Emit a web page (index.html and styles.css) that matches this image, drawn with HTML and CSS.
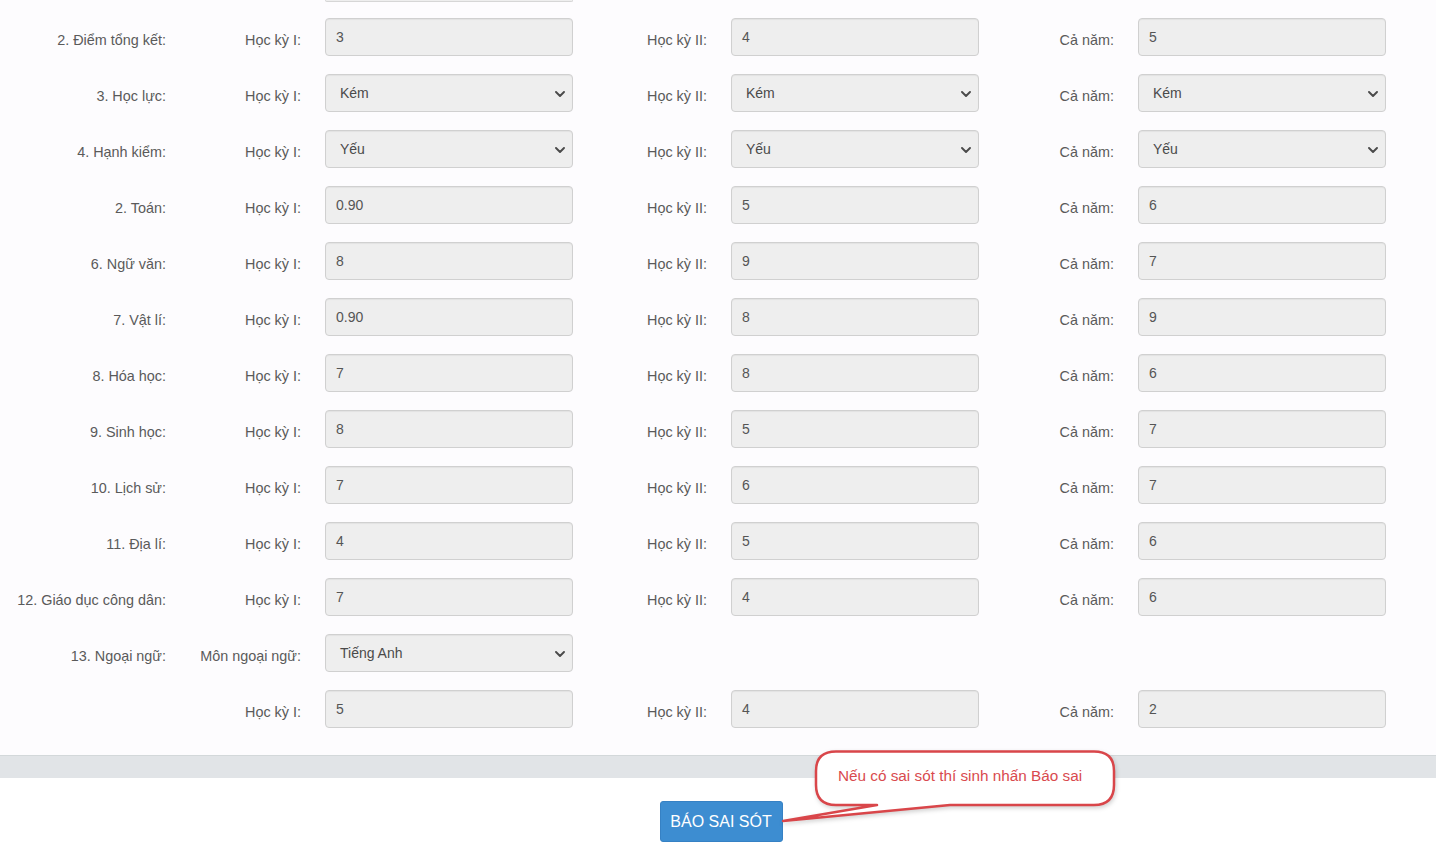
FILE: index.html
```html
<!DOCTYPE html>
<html lang="vi">
<head>
<meta charset="utf-8">
<title>Kết quả học tập</title>
<link rel="stylesheet" href="styles.css">
</head>
<body>
<div class="page">
  <section class="form">
    <div class="row row-sliver">
      <div></div><div></div>
      <div class="sliver"></div>
    </div>

    <div class="row">
      <div class="rlabel">2. Điểm tổng kết:</div>
      <div class="slabel">Học kỳ I:</div><div class="control">3</div>
      <div class="slabel">Học kỳ II:</div><div class="control">4</div>
      <div class="slabel">Cả năm:</div><div class="control">5</div>
    </div>

    <div class="row">
      <div class="rlabel">3. Học lực:</div>
      <div class="slabel">Học kỳ I:</div><div class="control select"><span>Kém</span><svg class="chev" viewBox="0 0 10 6" width="10" height="6"><path d="M1 1 L5 5 L9 1" /></svg></div>
      <div class="slabel">Học kỳ II:</div><div class="control select"><span>Kém</span><svg class="chev" viewBox="0 0 10 6" width="10" height="6"><path d="M1 1 L5 5 L9 1" /></svg></div>
      <div class="slabel">Cả năm:</div><div class="control select"><span>Kém</span><svg class="chev" viewBox="0 0 10 6" width="10" height="6"><path d="M1 1 L5 5 L9 1" /></svg></div>
    </div>

    <div class="row">
      <div class="rlabel">4. Hạnh kiểm:</div>
      <div class="slabel">Học kỳ I:</div><div class="control select"><span>Yếu</span><svg class="chev" viewBox="0 0 10 6" width="10" height="6"><path d="M1 1 L5 5 L9 1" /></svg></div>
      <div class="slabel">Học kỳ II:</div><div class="control select"><span>Yếu</span><svg class="chev" viewBox="0 0 10 6" width="10" height="6"><path d="M1 1 L5 5 L9 1" /></svg></div>
      <div class="slabel">Cả năm:</div><div class="control select"><span>Yếu</span><svg class="chev" viewBox="0 0 10 6" width="10" height="6"><path d="M1 1 L5 5 L9 1" /></svg></div>
    </div>

    <div class="row">
      <div class="rlabel">2. Toán:</div>
      <div class="slabel">Học kỳ I:</div><div class="control">0.90</div>
      <div class="slabel">Học kỳ II:</div><div class="control">5</div>
      <div class="slabel">Cả năm:</div><div class="control">6</div>
    </div>

    <div class="row">
      <div class="rlabel">6. Ngữ văn:</div>
      <div class="slabel">Học kỳ I:</div><div class="control">8</div>
      <div class="slabel">Học kỳ II:</div><div class="control">9</div>
      <div class="slabel">Cả năm:</div><div class="control">7</div>
    </div>

    <div class="row">
      <div class="rlabel">7. Vật lí:</div>
      <div class="slabel">Học kỳ I:</div><div class="control">0.90</div>
      <div class="slabel">Học kỳ II:</div><div class="control">8</div>
      <div class="slabel">Cả năm:</div><div class="control">9</div>
    </div>

    <div class="row">
      <div class="rlabel">8. Hóa học:</div>
      <div class="slabel">Học kỳ I:</div><div class="control">7</div>
      <div class="slabel">Học kỳ II:</div><div class="control">8</div>
      <div class="slabel">Cả năm:</div><div class="control">6</div>
    </div>

    <div class="row">
      <div class="rlabel">9. Sinh học:</div>
      <div class="slabel">Học kỳ I:</div><div class="control">8</div>
      <div class="slabel">Học kỳ II:</div><div class="control">5</div>
      <div class="slabel">Cả năm:</div><div class="control">7</div>
    </div>

    <div class="row">
      <div class="rlabel">10. Lịch sử:</div>
      <div class="slabel">Học kỳ I:</div><div class="control">7</div>
      <div class="slabel">Học kỳ II:</div><div class="control">6</div>
      <div class="slabel">Cả năm:</div><div class="control">7</div>
    </div>

    <div class="row">
      <div class="rlabel">11. Địa lí:</div>
      <div class="slabel">Học kỳ I:</div><div class="control">4</div>
      <div class="slabel">Học kỳ II:</div><div class="control">5</div>
      <div class="slabel">Cả năm:</div><div class="control">6</div>
    </div>

    <div class="row">
      <div class="rlabel">12. Giáo dục công dân:</div>
      <div class="slabel">Học kỳ I:</div><div class="control">7</div>
      <div class="slabel">Học kỳ II:</div><div class="control">4</div>
      <div class="slabel">Cả năm:</div><div class="control">6</div>
    </div>

    <div class="row">
      <div class="rlabel">13. Ngoại ngữ:</div>
      <div class="slabel">Môn ngoại ngữ:</div><div class="control select"><span>Tiếng Anh</span><svg class="chev" viewBox="0 0 10 6" width="10" height="6"><path d="M1 1 L5 5 L9 1" /></svg></div>
    </div>

    <div class="row">
      <div class="rlabel"></div>
      <div class="slabel">Học kỳ I:</div><div class="control">5</div>
      <div class="slabel">Học kỳ II:</div><div class="control">4</div>
      <div class="slabel">Cả năm:</div><div class="control">2</div>
    </div>
  </section>

  <div class="band"></div>

  <footer class="footer">
    <button class="btn">BÁO SAI SÓT</button>
    <div class="callout">
      <svg class="callout-shape" width="340" height="90" viewBox="0 0 340 90">
        <path d="M58 1.5 H316 Q336 1.5 336 21 V35 Q336 55 316 55 H172 L5 71 L99 55 H58 Q38 55 38 35 V21 Q38 1.5 58 1.5 Z" />
      </svg>
      <span class="callout-text">Nếu có sai sót thí sinh nhấn Báo sai</span>
    </div>
  </footer>
</div>
</body>
</html>
```

FILE: styles.css
```css
* { box-sizing: border-box; }

html, body {
  margin: 0;
  padding: 0;
  background: #ffffff;
}

body {
  font-family: "Liberation Sans", Arial, sans-serif;
  font-size: 14px;
  color: #5a5a5a;
}

.page {
  width: 1436px;
  height: 849px;
  overflow: hidden;
}

.form {
  background: #fdfcfe;
  padding-bottom: 9px;
}

.row {
  display: grid;
  grid-template-columns: 166px 159px 248px 158px 248px 159px 248px;
  height: 38px;
  margin-bottom: 18px;
}

.row-sliver {
  height: 2px;
  margin-bottom: 16px;
}

.sliver {
  height: 2px;
  border: 1px solid #d6d6d6;
  border-top: none;
  border-radius: 0 0 4px 4px;
  background: #eeeeee;
}

.rlabel,
.slabel {
  text-align: right;
  padding-top: 12px;
  line-height: 20px;
  white-space: nowrap;
  font-size: 14.4px;
}

.slabel {
  padding-right: 24px;
}

.control {
  height: 38px;
  border: 1px solid #d0d0d0;
  border-radius: 4px;
  background: #eeeeee;
  box-shadow: inset 0 1px 1px rgba(0, 0, 0, 0.05);
  padding: 0 10px;
  line-height: 36px;
  color: #555555;
  font-size: 14px;
}

.control.select {
  display: flex;
  align-items: center;
  justify-content: space-between;
  padding: 0 7px 0 14px;
  line-height: normal;
  color: #4a4a4a;
}

.chev {
  display: block;
  margin-top: 1px;
}

.chev path {
  fill: none;
  stroke: #4a4a4a;
  stroke-width: 1.9;
  stroke-linecap: round;
  stroke-linejoin: round;
}

.band {
  height: 23px;
  background: #e1e4e7;
  border-top: 1px solid #d3d8da;
}

.footer {
  position: relative;
  display: flex;
  justify-content: center;
  padding-top: 23px;
  padding-left: 6px;
  background: #ffffff;
}

.btn {
  height: 41px;
  width: 123px;
  padding: 0;
  border: 1px solid #3681c4;
  border-radius: 3px;
  background: #3d8dd1;
  color: #ffffff;
  font-family: "Liberation Sans", Arial, sans-serif;
  font-size: 16px;
  line-height: 39px;
  cursor: pointer;
}

.callout {
  position: absolute;
  left: 778px;
  top: -28px;
  width: 340px;
  height: 90px;
}

.callout-shape {
  position: absolute;
  left: 0;
  top: 0;
  overflow: visible;
  filter: drop-shadow(1px 2px 2px rgba(0, 0, 0, 0.18));
}

.callout-shape path {
  fill: #ffffff;
  stroke: #d9464a;
  stroke-width: 2.5;
  stroke-linejoin: round;
}

.callout-text {
  position: absolute;
  left: 60px;
  top: 17px;
  font-size: 15.3px;
  color: #d94a4e;
  white-space: nowrap;
}
```
